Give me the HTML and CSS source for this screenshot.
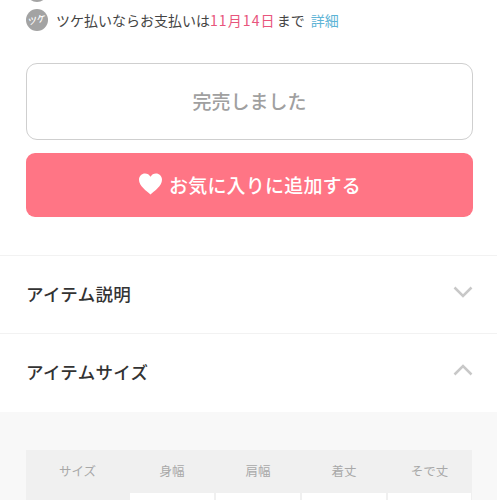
FILE: index.html
```html
<!DOCTYPE html>
<html lang="ja">
<head>
<meta charset="utf-8">
<title>アイテム</title>
<link rel="stylesheet" href="styles.css">
</head>
<body>
<main class="page">
  <div class="pay-row pay-row-cut">
    <span class="pay-icon"></span>
  </div>
  <div class="pay-row">
    <span class="pay-icon"><span class="pay-icon-label">ツケ</span></span>
    <p class="pay-text">ツケ払いならお支払いは<span class="date">11月14日</span>まで<a class="link">詳細</a></p>
  </div>
  <div class="actions">
    <div class="btn btn-soldout">完売しました</div>
    <div class="btn btn-fav">
      <svg class="heart" viewBox="0 0 24 22" aria-hidden="true"><path d="M12 21.500C8 18 .5 13 .5 6.800.5 3 3.300.5 6.500.5c2.400 0 4.400 1.200 5.500 3.300C13.100 1.700 15.100.5 17.500.5c3.200 0 6 2.500 6 6.300C23.500 13 16 18 12 21.500z"/></svg>
      <span>お気に入りに追加する</span>
    </div>
  </div>
  <section class="accordion">
    <div class="acc-row">
      <h2>アイテム説明</h2>
      <svg class="chev" viewBox="0 0 20 12" aria-hidden="true"><path d="M1.500 1.500 10 10l8.500-8.500"/></svg>
    </div>
    <div class="acc-row">
      <h2>アイテムサイズ</h2>
      <svg class="chev" viewBox="0 0 20 12" aria-hidden="true"><path d="M1.500 10.500 10 2l8.500 8.500"/></svg>
    </div>
  </section>
  <section class="size-panel">
    <div class="size-table">
      <div class="th">サイズ</div>
      <div class="th">身幅</div>
      <div class="th">肩幅</div>
      <div class="th">着丈</div>
      <div class="th">そで丈</div>
      <div class="th"></div>
      <div class="td"></div>
      <div class="td"></div>
      <div class="td"></div>
      <div class="td"></div>
    </div>
  </section>
</main>
</body>
</html>
```
FILE: styles.css
```css
* { box-sizing: border-box; }
html, body { margin: 0; padding: 0; background: #fff; }
html { overflow: hidden; height: 500px; }
body {
  width: 500px;
  height: 500px;
  overflow: hidden;
  font-family: "Noto Sans CJK JP", "Noto Sans", sans-serif;
  color: #333;
}
.page { width: 497px; margin-top: -20px; }
.pay-row {
  display: flex;
  align-items: center;
  gap: 8px;
  height: 22px;
  margin: 7px 0 0 26px;
}
.pay-row-cut { margin-top: 0; }
.pay-icon {
  flex: none;
  display: flex;
  align-items: center;
  justify-content: center;
  width: 22px;
  height: 22px;
  border-radius: 50%;
  background: #a3a3a3;
  color: #fff;
}
.pay-icon-label {
  font-size: 9px;
  font-weight: 500;
  line-height: 12px;
  transform: rotate(-14deg) skewX(-12deg);
}
.pay-text { margin: 0; font-size: 14px; line-height: 22px; color: #444; white-space: nowrap; }
.date { color: #e8557c; letter-spacing: 1.100px; margin-right: 1px; }
.link { margin-left: 6px; color: #5db4d6; }
.actions {
  display: flex;
  flex-direction: column;
  gap: 13px;
  margin: 32px 24px 0 26px;
}
.btn {
  display: flex;
  align-items: center;
  justify-content: center;
  padding-bottom: 2px;
  font-size: 19px;
  font-weight: 500;
}
.btn-soldout {
  height: 77px;
  border: 1px solid #cfcfcf;
  border-radius: 11px;
  color: #a0a0a0;
}
.btn-fav {
  height: 64px;
  gap: 6px;
  border-radius: 9px;
  background: #ff7585;
  color: #fff;
  letter-spacing: .2px;
}
.heart { width: 25px; height: 22px; fill: #fff; }
.accordion { margin-top: 38px; }
.acc-row {
  display: flex;
  align-items: center;
  justify-content: space-between;
  height: 78px;
  padding: 0 24px 3px 26px;
  border-top: 1px solid #f2f2f2;
}
.acc-row h2 { margin: 0; font-size: 17.500px; font-weight: 500; letter-spacing: .3px; color: #333; }
.chev {
  width: 20px;
  height: 12px;
  margin-bottom: 2px;
  fill: none;
  stroke: #c8c8c8;
  stroke-width: 2.500;
}
.size-panel {
  height: 88px;
  overflow: hidden;
  padding: 38px 25px 0 26px;
  margin-top: 1px;
  background: #f8f8f8;
}
.size-table {
  display: grid;
  grid-template-columns: 103px 86px 86px 86px 85px;
  grid-auto-rows: 43px;
  background: #f0f0f0;
}
.th {
  display: flex;
  align-items: center;
  justify-content: center;
  padding-bottom: 2px;
  font-size: 12.500px;
  color: #a8a8a8;
}
.td { background: #fff; margin-left: 1px; margin-right: 1px; }
```
